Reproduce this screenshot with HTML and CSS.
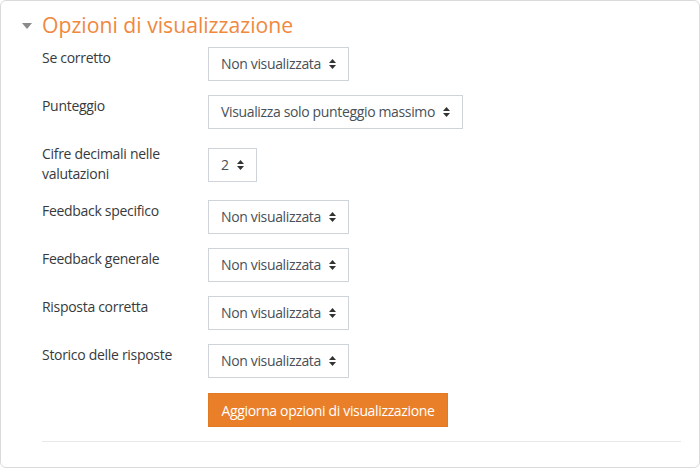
FILE: index.html
```html
<!DOCTYPE html>
<html lang="it">
<head>
<meta charset="utf-8">
<title>Opzioni di visualizzazione</title>
<link rel="stylesheet" href="styles.css">
</head>
<body>
<div class="card">
  <div class="legend">
    <svg class="caret" width="10" height="6" viewBox="0 0 10 6"><polygon points="0,0 10,0 5,6" fill="#8a8a8a"/></svg>
    <span class="legend-text">Opzioni di visualizzazione</span>
  </div>
  <div class="rows">
    <div class="row">
      <div class="label">Se corretto</div>
      <div class="select"><span>Non visualizzata</span><svg class="arrows" width="7" height="10" viewBox="0 0 7 10"><polygon points="3.5,0 7,4 0,4" fill="#333"/><polygon points="0,6 7,6 3.5,10" fill="#333"/></svg></div>
    </div>
    <div class="row">
      <div class="label">Punteggio</div>
      <div class="select"><span>Visualizza solo punteggio massimo</span><svg class="arrows" width="7" height="10" viewBox="0 0 7 10"><polygon points="3.5,0 7,4 0,4" fill="#333"/><polygon points="0,6 7,6 3.5,10" fill="#333"/></svg></div>
    </div>
    <div class="row row-tall">
      <div class="label">Cifre decimali nelle valutazioni</div>
      <div class="select select-offset"><span>2</span><svg class="arrows" width="7" height="10" viewBox="0 0 7 10"><polygon points="3.5,0 7,4 0,4" fill="#333"/><polygon points="0,6 7,6 3.5,10" fill="#333"/></svg></div>
    </div>
    <div class="row">
      <div class="label">Feedback specifico</div>
      <div class="select"><span>Non visualizzata</span><svg class="arrows" width="7" height="10" viewBox="0 0 7 10"><polygon points="3.5,0 7,4 0,4" fill="#333"/><polygon points="0,6 7,6 3.5,10" fill="#333"/></svg></div>
    </div>
    <div class="row">
      <div class="label">Feedback generale</div>
      <div class="select"><span>Non visualizzata</span><svg class="arrows" width="7" height="10" viewBox="0 0 7 10"><polygon points="3.5,0 7,4 0,4" fill="#333"/><polygon points="0,6 7,6 3.5,10" fill="#333"/></svg></div>
    </div>
    <div class="row">
      <div class="label">Risposta corretta</div>
      <div class="select"><span>Non visualizzata</span><svg class="arrows" width="7" height="10" viewBox="0 0 7 10"><polygon points="3.5,0 7,4 0,4" fill="#333"/><polygon points="0,6 7,6 3.5,10" fill="#333"/></svg></div>
    </div>
    <div class="row">
      <div class="label">Storico delle risposte</div>
      <div class="select"><span>Non visualizzata</span><svg class="arrows" width="7" height="10" viewBox="0 0 7 10"><polygon points="3.5,0 7,4 0,4" fill="#333"/><polygon points="0,6 7,6 3.5,10" fill="#333"/></svg></div>
    </div>
    <div class="actions">
      <button class="btn">Aggiorna opzioni di visualizzazione</button>
    </div>
    <div class="divider"></div>
  </div>
</div>
</body>
</html>
```
FILE: styles.css
```css
html, body {
  margin: 0;
  padding: 0;
  background: #ffffff;
}
body {
  font-family: "Open Sans", "Liberation Sans", sans-serif;
  color: #373a3c;
}
.card {
  box-sizing: border-box;
  width: 700px;
  height: 468px;
  border: 1px solid #dadada;
  border-radius: 6px;
  padding: 8px 18px 0 21px;
  background: #fff;
}
.legend {
  display: flex;
  align-items: center;
  gap: 10px;
  height: 32px;
}
.caret {
  display: block;
  margin-top: 1px;
}
.legend-text {
  font-size: 21.2px;
  color: #f0883e;
  line-height: 32px;
}
.rows {
  padding-left: 20px;
  padding-top: 6px;
}
.row {
  display: flex;
  align-items: flex-start;
  margin-bottom: 14px;
}
.row-tall {
  margin-bottom: 16px;
}
.label {
  width: 166px;
  flex: none;
  font-size: 14px;
  letter-spacing: -0.3px;
  line-height: 20px;
  padding-top: 1px;
  padding-right: 12px;
  box-sizing: border-box;
}
.select {
  display: inline-flex;
  align-items: center;
  gap: 8px;
  height: 34px;
  box-sizing: border-box;
  border: 1px solid #ced4da;
  padding: 0 12px 0 12px;
  font-size: 14px;
  letter-spacing: -0.35px;
  color: #495057;
  background: #fff;
}
.select span {
  line-height: 20px;
}
.select-offset {
  margin-top: 5px;
}
.arrows {
  display: block;
}
.actions {
  padding-left: 166px;
  padding-top: 1px;
}
.btn {
  display: block;
  height: 34px;
  width: 240px;
  border: 1px solid #e07a25;
  background: #e98029;
  color: #fff;
  font-family: "Open Sans", "Liberation Sans", sans-serif;
  font-size: 14px;
  letter-spacing: -0.35px;
  white-space: nowrap;
  padding: 0;
  cursor: pointer;
}
.divider {
  margin-top: 14px;
  height: 1px;
  background: #e8e8e8;
}
```
